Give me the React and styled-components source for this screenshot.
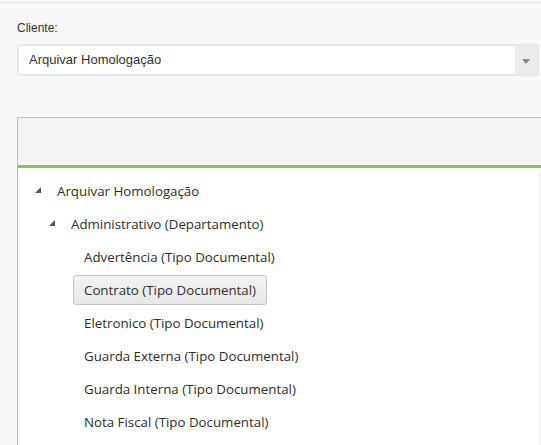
import React from "react";
import styled, { createGlobalStyle } from "styled-components";

const GlobalStyle = createGlobalStyle`
  html, body {
    margin: 0;
    padding: 0;
    background: #f8f8f8;
    overflow: hidden;
  }
  body {
    font-family: "Liberation Sans", Arial, sans-serif;
    color: #333;
  }
`;

const Page = styled.div`
  width: 541px;
  height: 445px;
  overflow: hidden;
  border-top: 1px solid #e4e4e4;
  margin-top: 2px;
  box-sizing: border-box;
`;

const Field = styled.div`
  padding: 18px 0 0 17px;
`;

const Label = styled.div`
  font-size: 12px;
  line-height: 14px;
  color: #333;
  margin-bottom: 9px;
`;

const Select = styled.div`
  width: 522px;
  height: 32px;
  box-sizing: border-box;
  border: 2px solid #e6e9ed;
  border-radius: 2px;
  display: flex;
  background: #fff;
`;

const SelectValue = styled.div`
  flex: 1;
  font-size: 13px;
  line-height: 28px;
  padding-left: 10px;
  color: #333;
`;

const SelectArrow = styled.div`
  width: 22px;
  background: #ececec;
  display: flex;
  align-items: center;
  justify-content: center;
  &::after {
    content: "";
    border-left: 4px solid transparent;
    border-right: 4px solid transparent;
    border-top: 5px solid #8a8a8a;
    margin-top: 2px;
  }
`;

const Panel = styled.div`
  margin: 41px 0 0 17px;
  width: 524px;
  border-top: 1px solid #c2c2c2;
  border-left: 1px solid #b9b9b9;
  background: #fff;
  height: 340px;
  box-sizing: border-box;
`;

const PanelHeader = styled.div`
  height: 47px;
  background: #f4f4f4;
  border-bottom: 3px solid #8bc34a;
`;

const PanelBody = styled.div`
  display: flex;
`;

const Tree = styled.ul`
  flex: 1;
  list-style: none;
  margin: 0;
  padding: 6px 0 0 0;
  font-family: "Open Sans", "Noto Sans", sans-serif;
  font-size: 13.3px;
  color: #2e2e2e;
`;

const Node = styled.li`
  display: flex;
  align-items: center;
  height: 33px;
  padding-left: ${(p) => p.$indent}px;
`;

const Toggle = styled.span`
  width: 0;
  height: 0;
  border-left: 6px solid transparent;
  border-bottom: 6px solid #555;
  margin-right: 15px;
  margin-bottom: 2px;
`;

const Item = styled.span`
  padding: 5px 10px;
  margin-left: -10px;
  border: 1px solid ${(p) => (p.$selected ? "#c5c5c5" : "transparent")};
  border-radius: 3px;
  background: ${(p) =>
    p.$selected ? "linear-gradient(#f3f3f3, #e8e8e8)" : "transparent"};
  line-height: 18px;
`;

const Scrollbar = styled.div`
  width: 2px;
  margin-top: 5px;
  background: #efefef;
  height: 280px;
`;

const docs = [
  "Advertência",
  "Contrato",
  "Eletronico",
  "Guarda Externa",
  "Guarda Interna",
  "Nota Fiscal",
];

export default function App() {
  return (
    <>
      <GlobalStyle />
      <Page>
        <Field>
          <Label>Cliente:</Label>
          <Select>
            <SelectValue>Arquivar Homologação</SelectValue>
            <SelectArrow />
          </Select>
        </Field>
        <Panel>
          <PanelHeader />
          <PanelBody>
            <Tree>
              <Node $indent={17}>
                <Toggle />
                <Item>Arquivar Homologação</Item>
              </Node>
              <Node $indent={31}>
                <Toggle />
                <Item>Administrativo (Departamento)</Item>
              </Node>
              {docs.map((d) => (
                <Node key={d} $indent={65}>
                  <Item $selected={d === "Contrato"}>{d} (Tipo Documental)</Item>
                </Node>
              ))}
            </Tree>
            <Scrollbar />
          </PanelBody>
        </Panel>
      </Page>
    </>
  );
}
